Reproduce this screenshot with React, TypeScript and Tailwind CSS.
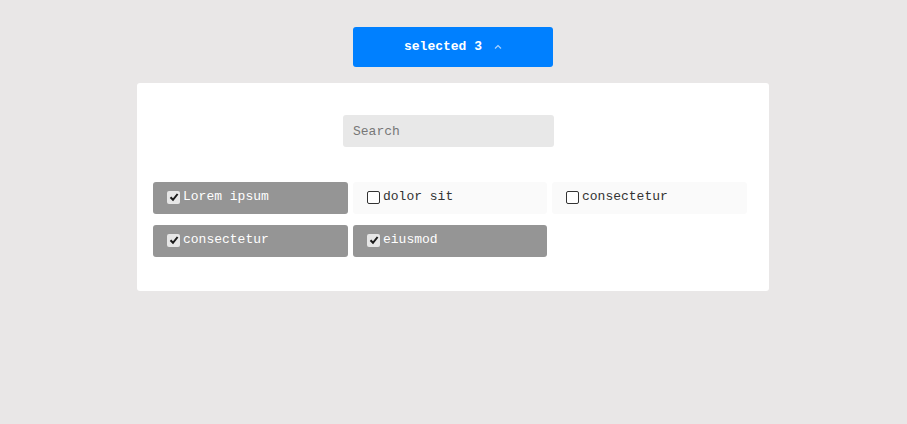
import React from 'react';

const ITEMS = [
  { label: 'Lorem ipsum', checked: true },
  { label: 'dolor sit', checked: false },
  { label: 'consectetur', checked: false },
  { label: 'consectetur', checked: true },
  { label: 'eiusmod', checked: true },
];

const Box = ({ checked }: { checked: boolean }) =>
  checked ? (
    <span className="flex h-[13px] w-[13px] items-center justify-center rounded-[2px] bg-[#e6e6e6]">
      <svg width="10" height="10" viewBox="0 0 10 10">
        <path d="M1.5 5.2 L4 7.8 L8.6 2" fill="none" stroke="#1a1a1a" strokeWidth="2" />
      </svg>
    </span>
  ) : (
    <span className="block h-[13px] w-[13px] rounded-[2px] border border-[#333] bg-white" />
  );

export default function App() {
  return (
    <div className="min-h-[424px] bg-[#e9e7e7] pt-[27px] pr-[1px] font-['Liberation_Mono',monospace]">
      <div className="flex justify-center">
        <button className="flex h-[40px] w-[200px] items-center justify-center gap-3 rounded-[3px] bg-[#0080ff] text-[13px] font-bold text-white">
          <span>selected 3</span>
          <svg width="8" height="6" viewBox="0 0 8 6">
            <path d="M1 4.5 L4 1.5 L7 4.5" fill="none" stroke="#a9d1ff" strokeWidth="1.2" />
          </svg>
        </button>
      </div>

      <div className="mx-auto mt-[16px] h-[208px] w-[632px] rounded-[3px] bg-white pt-[32px] pl-[16px]">
        <input
          placeholder="Search"
          className="ml-[190px] block h-[32px] w-[211px] rounded-[3px] bg-[#e8e8e8] px-[10px] text-[13px] text-[#333] outline-none placeholder:text-[#777]"
        />
        <div className="mt-[35px] grid w-[595px] grid-cols-[195px_194px_195px] gap-x-[5px] gap-y-[11px]">
          {ITEMS.map((it, i) => (
            <div
              key={i}
              className={
                'flex h-[32px] items-center gap-[3px] rounded-[3px] pb-[2px] pl-[14px] text-[13px] ' +
                (it.checked ? 'bg-[#959595] text-white' : 'bg-[#fafafa] text-[#333]')
              }
            >
              <Box checked={it.checked} />
              <span>{it.label}</span>
            </div>
          ))}
        </div>
      </div>
    </div>
  );
}
